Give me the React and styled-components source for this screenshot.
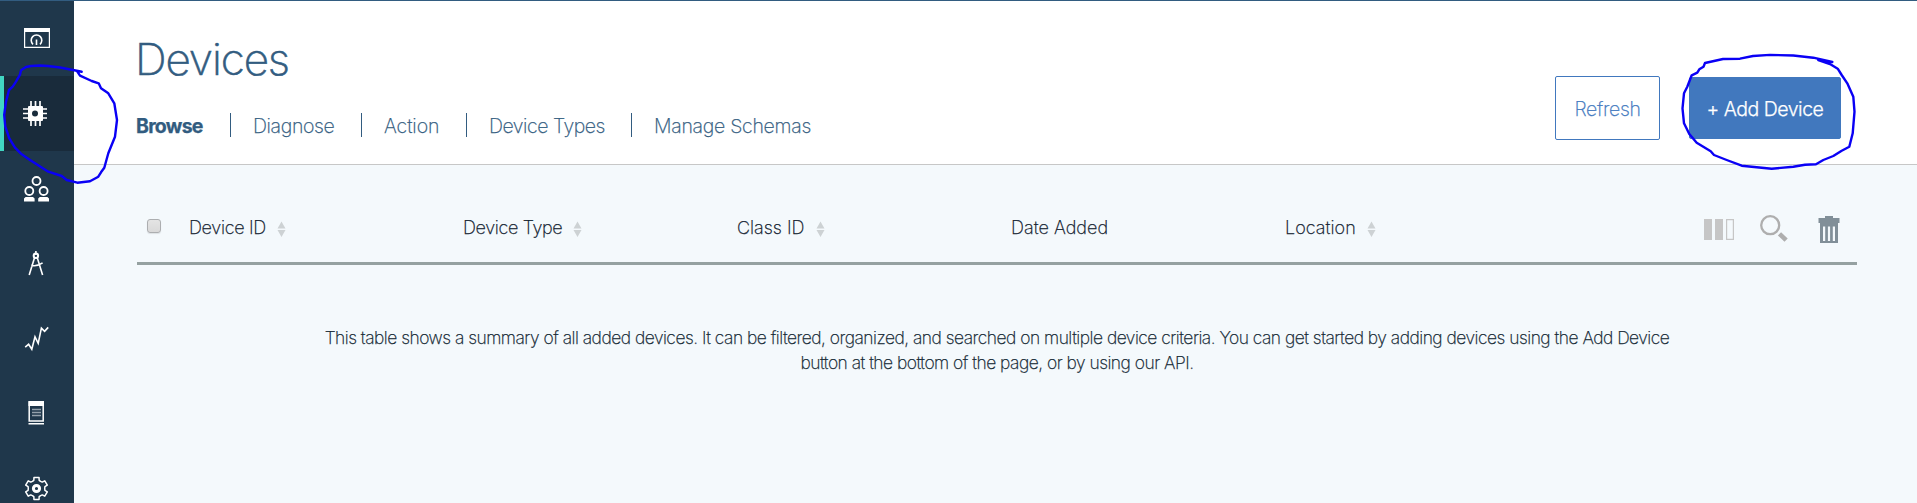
import React from "react";
import styled, { createGlobalStyle } from "styled-components";

const Global = createGlobalStyle`
  * { box-sizing: border-box; }
  body { margin: 0; background: #f4f9fc; font-family: Inter, "Liberation Sans", sans-serif; font-weight: 200; -webkit-text-stroke: 0.25px currentColor; }
`;

const Page = styled.div`
  position: relative;
  display: flex;
  height: 503px;
  overflow: hidden;
  border-top: 1px solid #325c80;
`;

const Sidebar = styled.nav`
  flex: 0 0 74px;
  background: #1f374b;
`;

const NavItem = styled.a`
  display: flex;
  height: 75px;
  align-items: flex-start;
  padding-top: ${(p) => p.$top}px;
  padding-left: ${(p) => (p.$active ? 17 : 21)}px;
  background: ${(p) => (p.$active ? "#192b3b" : "transparent")};
  border-left: ${(p) => (p.$active ? "4px solid #41d6c3" : "0")};
  svg { display: block; }
`;

const Main = styled.main`
  flex: 1;
  min-width: 0;
`;

const Header = styled.header`
  display: flex;
  justify-content: space-between;
  height: 164px;
  padding: 0 76px 0 62px;
  background: #fff;
  border-bottom: 1px solid #c7c7c7;
`;

const Title = styled.h1`
  margin: 30px 0 0 -1px;
  font-size: 44px;
  line-height: 56px;
  font-weight: 200;
  letter-spacing: -1.1px;
  color: #325c80;
  -webkit-text-stroke: 0.6px currentColor;
`;

const Tabs = styled.div`
  display: flex;
  height: 24px;
  margin-top: 26px;
`;

const Tab = styled.a`
  width: ${(p) => p.$width}px;
  padding-left: ${(p) => (p.$active ? 0 : 22)}px;
  border-right: ${(p) => (p.$last ? "0" : "1px solid #325c80")};
  font-size: 19.5px;
  line-height: 26px;
  font-weight: ${(p) => (p.$active ? 700 : 200)};
  letter-spacing: ${(p) => p.$track}px;
  white-space: nowrap;
  color: #325c80;
`;

const Actions = styled.div`
  display: flex;
  align-items: center;
  gap: 29px;
  height: 64px;
  margin-top: 75px;
`;

const Button = styled.button`
  width: ${(p) => (p.$primary ? 152 : 105)}px;
  height: ${(p) => (p.$primary ? 62 : 64)}px;
  padding: 2px 0 0;
  border: 1px solid #4178be;
  border-radius: 2px;
  background: ${(p) => (p.$primary ? "#4178be" : "#fff")};
  color: ${(p) => (p.$primary ? "#fff" : "#4178be")};
  font: ${(p) => (p.$primary ? 300 : 200)} 19.5px Inter, sans-serif;
  letter-spacing: ${(p) => (p.$primary ? -0.5 : -0.3)}px;
`;

const Table = styled.section`
  margin: 0 60px 0 63px;
`;

const TableHead = styled.div`
  display: flex;
  align-items: center;
  height: 100px;
  padding-top: 29px;
  padding-left: 10px;
  border-bottom: 3px solid #95a1a1;
`;

const Check = styled.span`
  width: 14px;
  height: 14px;
  margin: 0 28px 4px 0;
  border: 1px solid #acaeb0;
  border-radius: 3px;
  background: linear-gradient(#e4e4e4, #d9d9d9);
  box-shadow: 0 1px 1px #dde1e4;
`;

const Column = styled.div`
  display: flex;
  align-items: center;
  gap: 11px;
  width: 274px;
  font-size: 18px;
  line-height: 22px;
  letter-spacing: ${(p) => p.$track}px;
  white-space: nowrap;
  color: #10202e;
`;

const Tools = styled.div`
  display: flex;
  align-items: center;
  gap: 25px;
  margin-left: auto;
  padding: 2px 17px 0 0;
  svg { display: block; }
`;

const Empty = styled.p`
  margin: 60px 0 0;
  text-align: center;
  font-size: 17.4px;
  line-height: 25px;
  letter-spacing: -0.49px;
  color: #152935;
`;

const Ink = styled.svg`
  position: absolute;
  left: ${(p) => p.$x}px;
  top: ${(p) => p.$y}px;
  fill: none;
  stroke: #0a00f5;
  stroke-width: 2.4;
  stroke-linecap: round;
  stroke-linejoin: round;
  pointer-events: none;
`;

const Icon = ({ children }) => (
  <svg width="30" height="30" viewBox="0 0 30 30" fill="none" stroke="#fff">{children}</svg>
);

const Gauge = () => (
  <Icon>
    <path d="M3.600 6.500h24.800v18.900H3.600z" strokeWidth="1.2" />
    <path d="M3 6h26v4H3z" fill="#fff" stroke="none" />
    <path d="M12 22.300a5.300 5.300 0 1 1 7 0M15.500 17.500v5.500" strokeWidth="1.6" />
  </Icon>
);

const Chip = () => (
  <Icon>
    <rect x="7" y="6" width="15" height="15" rx="1" fill="#fff" stroke="none" />
    <path d="M10 1v5M14.5 1v5M19 1v5M10 21v5M14.5 21v5M19 21v5M2 9h5M2 13.5h5M2 18h5M22 9h4M22 13.5h4M22 18h4" strokeWidth="1.7" />
    <circle cx="14" cy="13.5" r="3" fill="#192b3b" stroke="none" />
  </Icon>
);

const People = () => (
  <Icon>
    <g strokeWidth="1.8">
      <circle cx="15.5" cy="7" r="4" />
      <circle cx="8.3" cy="17" r="4" />
      <circle cx="22.6" cy="17" r="4" />
    </g>
    <path d="M3 27.500v-3l1.600-1.500H12l1.600 1.500v3zM17.200 27.500v-3l1.600-1.500H26.400L28 24.500v3z" fill="#fff" stroke="none" />
  </Icon>
);

const Compass = () => (
  <Icon>
    <path d="M14.9 3v4M13.6 9.5 8.2 27M16.2 9.5l5.4 17.5M10.3 17.3c3.5 1 7 .5 11.3-2.4" strokeWidth="1.6" />
    <circle cx="14.9" cy="7.7" r="2.2" strokeWidth="2" />
  </Icon>
);

const Trend = () => (
  <Icon>
    <path d="M4.2 24.100 7.6 21.300l3.200 5L14 13.800l3.200 6.500 3.200-15.200 3.200 3.300 3.600-4" strokeWidth="1.6" />
  </Icon>
);

const Document = () => (
  <Icon>
    <path d="M8.2 4h14v19H8.2z" strokeWidth="1.5" />
    <path d="M7.5 3h15.500v5H7.5zM7.5 25h15.500v1.600H7.5z" fill="#fff" stroke="none" />
    <path d="M11 11.500h9M11 14.500h9M11 17.500h9" stroke="#94a1ac" strokeWidth="1.4" />
  </Icon>
);

const teeth = Array.from({ length: 6 }, (_, i) => {
  const at = (r, deg) => {
    const a = ((deg + i * 60) * Math.PI) / 180;
    return `${(15.5 + r * Math.sin(a)).toFixed(2)} ${(14.5 - r * Math.cos(a)).toFixed(2)}`;
  };
  return `${i ? "L" : "M"}${at(8.6, -18)}L${at(11.3, -13)}L${at(11.3, 13)}L${at(8.6, 18)}L${at(8.2, 30)}`;
}).join("") + "Z";

const Gear = () => (
  <Icon>
    <path d={teeth} strokeWidth="1.5" strokeLinejoin="round" />
    <circle cx="15.5" cy="14.5" r="3.1" strokeWidth="3" />
  </Icon>
);

const Sort = () => (
  <svg width="9" height="18" viewBox="0 0 9 18" fill="#cdd2d4">
    <path d="M4.5 2.500 8.500 9.500h-8zM.5 11h8l-4 7z" />
  </svg>
);

const NAV = [[Gauge, 21], [Chip, 24], [People, 23], [Compass, 22], [Trend, 22], [Document, 22], [Gear, 23]];
const TABS = [
  ["Browse", 95, -0.75],
  ["Diagnose", 131, -0.37],
  ["Action", 105, -0.05],
  ["Device Types", 165, -0.47],
  ["Manage Schemas", 190, -0.28],
];
const COLUMNS = [
  ["Device ID", -0.3, true],
  ["Device Type", -0.35, true],
  ["Class ID", 0, true],
  ["Date Added", 0.05, false],
  ["Location", 0.05, true],
];

export default function App() {
  return (
    <Page>
      <Global />
      <Sidebar>
        {NAV.map(([Glyph, top], i) => (
          <NavItem key={i} $top={top} $active={i === 1}><Glyph /></NavItem>
        ))}
      </Sidebar>
      <Main>
        <Header>
          <div>
            <Title>Devices</Title>
            <Tabs>
              {TABS.map(([label, width, track], i) => (
                <Tab key={label} $width={width} $track={track} $active={i === 0} $last={i === 4}>{label}</Tab>
              ))}
            </Tabs>
          </div>
          <Actions>
            <Button>Refresh</Button>
            <Button $primary>+ Add Device</Button>
          </Actions>
        </Header>
        <Table>
          <TableHead>
            <Check />
            {COLUMNS.map(([label, track, sortable]) => (
              <Column key={label} $track={track}>{label}{sortable && <Sort />}</Column>
            ))}
            <Tools>
              <svg width="30" height="21" viewBox="0 0 30 21">
                <path d="M0 0h8v21H0zM11 0h8v21h-8z" fill="#c6c6c6" />
                <path d="M22.6.6h6.8v19.8h-6.8z" fill="none" stroke="#c6c6c6" strokeWidth="1.2" />
              </svg>
              <svg width="34" height="28" viewBox="0 0 34 28" fill="none" stroke="#aeaeae">
                <circle cx="11.2" cy="10.2" r="9" strokeWidth="2.3" />
                <path d="m20.5 18.8 6.6 6.4" strokeWidth="4.6" />
              </svg>
              <svg width="22" height="27" viewBox="0 0 22 27" fill="#818f98">
                <path d="M7 0h8v2h6.5v5H20v20H2V7H.5V2H7z" />
                <path d="M5 10.5h2.2V25H5zM9.9 10.5h2.2V25H9.9zM14.8 10.5H17V25h-2.2z" fill="#f4f9fc" />
              </svg>
            </Tools>
          </TableHead>
          <Empty>
            This table shows a summary of all added devices. It can be filtered, organized, and searched on multiple device criteria. You can get started by adding devices using the Add Device
            <br />
            button at the bottom of the page, or by using our API.
          </Empty>
        </Table>
      </Main>
      <Ink $x={0} $y={59} width="124" height="130" viewBox="0 60 124 130">
        <path d="M81.700 71.700 73 70 60 67.500 48 66 40 65.500 31 66 26 67 21 70.300 20 74.700 16 81.700 12.700 86.700 9 90 6 101.700 4.200 115 5.300 126.700 9.300 138.300 15 147.700 21.700 154.300 30 160 48.300 171.700 61.700 176 66.700 180 77.300 182.700 90 181.300 98.300 176.700 101 172.300 104.300 167.700 108.300 153.300 115 136.700 117 120 114.300 103.300 108.300 93.300 101 88.300 98.700 83.300 91.700 81 80 75.700 76.700 70.700" />
      </Ink>
      <Ink $x={1675} $y={49} width="190" height="125" viewBox="1675 50 190 125">
        <path d="M1832.300 62 1813.300 57.700 1793.300 55.500 1770 54.900 1753 56 1740 58.700 1723 59 1705 63 1703.500 66.700 1699.300 69.300 1697.300 72.700 1691.700 75.300 1687.300 86.700 1684 93.300 1682.500 108.300 1684 123.300 1689.300 134 1696.700 142.700 1710.700 151.300 1714 155 1726.700 160 1741.700 165.700 1771.700 168.700 1793.300 166.700 1805 164.700 1816 164.300 1823.300 160 1833.300 156 1841.700 150.700 1849.300 146.700 1852.700 133.300 1854.500 111.700 1853.300 96.700 1847.300 83.300 1841.700 75 1837.700 68.700 1830 64 1818.300 60" />
      </Ink>
    </Page>
  );
}
